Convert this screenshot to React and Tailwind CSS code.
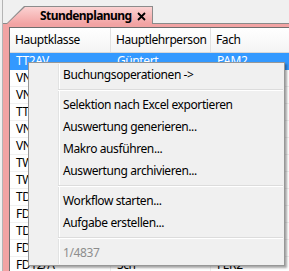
import React from "react";

const rows = [
  ["TT2AV", "Güntert", "PAM2"],
  ["VN1A", "Meier", "DEU"],
  ["VN1B", "Huber", "MAT"],
  ["TT1A", "Keller", "ENG"],
  ["VN2A", "Brunner", "DEU"],
  ["VN2B", "Frei", "GES"],
  ["TW1A", "Baumann", "WIR"],
  ["TW2A", "Graf", "REC"],
  ["TD1A", "Weber", "INF"],
  ["FD1A", "Schmid", "FRA"],
  ["TD2A", "Zürcher", "PHY"],
  ["FD2A", "Moser", "BIO"],
  ["FD12/A", "Sch", "FER2"],
];

function Item({ children, muted }) {
  return (
    <div
      className={
        "h-[22px] flex items-center pl-[34px] whitespace-nowrap " +
        (muted ? "text-[#8d8d8d]" : "text-black")
      }
    >
      {children}
    </div>
  );
}

function Sep() {
  return (
    <div className="h-[8px] flex flex-col justify-center pl-[29px] pr-[1px]">
      <div className="h-px bg-[#dcdcdc]" />
      <div className="h-px bg-white" />
    </div>
  );
}

export default function App() {
  return (
    <div className="w-[289px] h-[271px] overflow-hidden bg-[#f0f0f0] relative font-['Noto_Sans','Open_Sans',sans-serif] text-[12px] leading-none tracking-[-0.4px]">
      <div className="ml-[2px] border-l border-[#b4b4b4] h-full flex flex-col">
        {/* tab strip */}
        <div className="h-[24px] flex items-end border-b border-[#8a8a8a] shrink-0">
          <div className="relative z-10 ml-[3px] -mb-px h-[18px] w-[147px] shrink-0">
            <div className="absolute inset-0 bg-[#8c8c8c] [clip-path:polygon(18px_0,100%_0,100%_100%,0_100%)]" />
            <div className="absolute left-0 top-px right-px bottom-0 bg-gradient-to-b from-[#fbd2d2] to-[#f2a3a3] [clip-path:polygon(19px_0,100%_0,100%_100%,1px_100%)]" />
            <div className="relative h-full flex items-center pl-[34px] pt-[1px]">
              <span className="font-bold text-[12px] text-black tracking-[-0.55px]">Stundenplanung</span>
            </div>
            <svg className="absolute left-[131px] top-[6px]" width="9" height="9" viewBox="0 0 9 9">
              <path d="M1 1 L8 8 M8 1 L1 8" stroke="#000000" strokeWidth="1.8" />
            </svg>
          </div>
        </div>
        {/* panel */}
        <div className="flex-1 bg-[#f2a3a3] pl-[6px] pt-[3px] min-h-0">
          <div className="h-full bg-white border-l border-t border-[#6e6e6e] overflow-hidden">
            {/* header */}
            <div className="grid grid-cols-[101px_100px_1fr] h-[25px] bg-gradient-to-b from-white to-[#f4f4f4] border-b border-[#d8d8d8]">
              <div className="flex items-center pl-[5px] border-r border-[#e2e2e2]">Hauptklasse</div>
              <div className="flex items-center pl-[5px] border-r border-[#e2e2e2]">Hauptlehrperson</div>
              <div className="flex items-center pl-[5px]">Fach</div>
            </div>
            {rows.map((r, i) => (
              <div
                key={i}
                className={
                  "grid grid-cols-[101px_100px_1fr] h-[17px] border-b " +
                  (i === 0
                    ? "bg-[#3399ff] text-white border-[#3399ff]"
                    : "text-black border-[#f0f0f0]")
                }
              >
                <div className={"flex items-center pl-[6px] " + (i === 0 ? "" : "border-r border-[#f0f0f0]")}>{r[0]}</div>
                <div className={"flex items-center pl-[6px] " + (i === 0 ? "" : "border-r border-[#f0f0f0]")}>{r[1]}</div>
                <div className="flex items-center pl-[6px]">{r[2]}</div>
              </div>
            ))}
          </div>
        </div>
      </div>

      {/* context menu */}
      <div className="absolute left-[28px] top-[62px] w-[257px] h-[204px] bg-[#f0f0f0] border border-[#979797] shadow-[2px_2px_2px_rgba(0,0,0,0.35)] pt-px">
        <div className="absolute left-[29px] top-[1px] bottom-[1px] w-px bg-[#e2e3e3]" />
        <div className="absolute left-[30px] top-[1px] bottom-[1px] w-px bg-white" />
        <div className="relative">
          <Item>Buchungsoperationen -&gt;</Item>
          <Sep />
          <Item>Selektion nach Excel exportieren</Item>
          <Item>Auswertung generieren...</Item>
          <Item>Makro ausführen...</Item>
          <Item>Auswertung archivieren...</Item>
          <Sep />
          <Item>Workflow starten...</Item>
          <Item>Aufgabe erstellen...</Item>
          <Sep />
          <Item muted>1/4837</Item>
        </div>
      </div>
    </div>
  );
}
